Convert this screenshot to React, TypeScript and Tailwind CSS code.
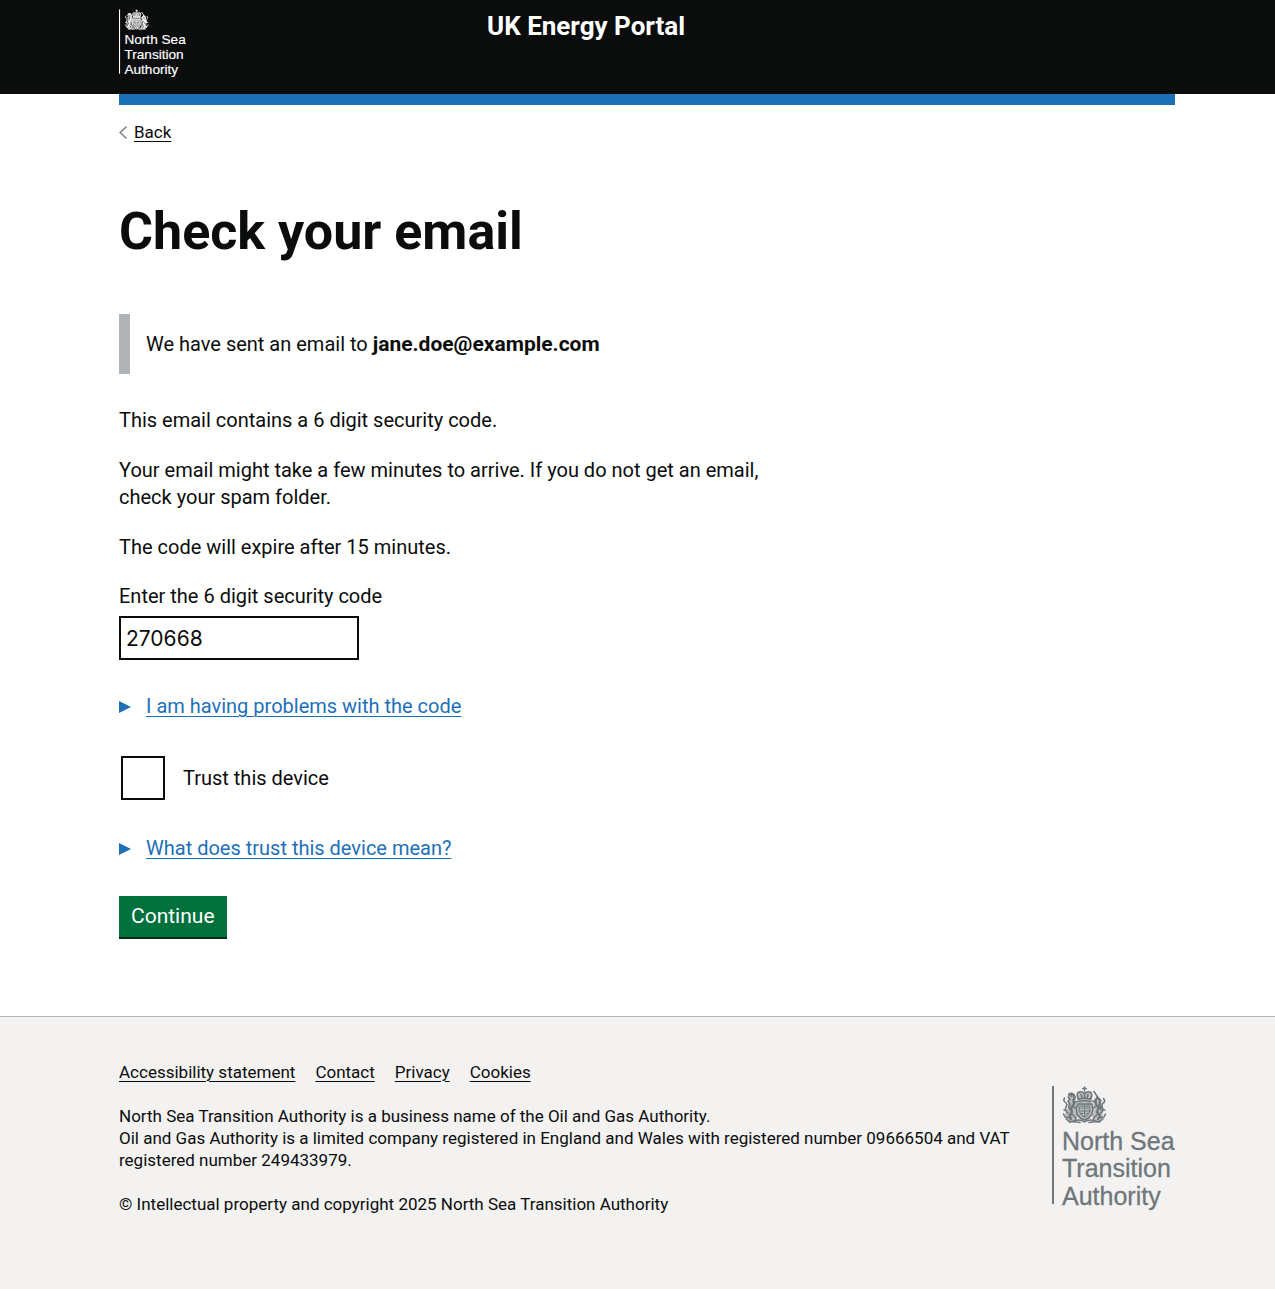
import { ReactNode, useState } from "react";

const footerLinks = ["Accessibility statement", "Contact", "Privacy", "Cookies"];

// Royal arms with the authority name underneath, takes its colour from the text colour
const Logo = ({ className }: { className: string }) => (
  <svg className={className} viewBox="0 0 123 125" fill="currentColor" role="img" aria-label="North Sea Transition Authority">
    <rect x="0" y="0" width="2" height="118" />
    {/* soft body tone behind the arms */}
    <g opacity="0.45">
      <path d="M25 6H40V17H25Z" />
      <path d="M24 17H41L42 25L38 33L32.500 35L27 33L23 25Z" />
      <path d="M16 9L22 8L24 16L26 31L23 35L15 34L13 28L16 22Z" />
      <path d="M45 11L49 14L50 22L51 32L47 35L41 34L40 29L43 23L41 16Z" />
    </g>
    <g fill="none" stroke="currentColor" strokeWidth="1.5" strokeLinecap="round" strokeLinejoin="round">
      {/* crown */}
      <path d="M26.500 12.500C24 9.500 25 6 28 5.800C30 5.700 31.500 6.500 32.500 7.500C33.500 6.500 35 5.700 37 5.800C40 6 41 9.500 38.500 12.500" />
      <path d="M26.500 13.200Q32.500 11.500 38.500 13.200M26.800 15.500Q32.500 13.800 38.200 15.500" />
      <path d="M32.500 1V5M30.800 2.500H34.200M32.500 7.500V12M29 8.500L30 11.500M36 8.500L35 11.500" />
      {/* garter and shield */}
      <path d="M26 18H39.500L41 22L40 28L36.500 32L32.500 34L28.500 32L25 28L24.200 22Z" />
      <path strokeWidth="1" d="M27.500 20H37.800V26Q36 30 32.600 31Q29 30 27.500 26ZM32.600 20V31M27.500 25H38M29 22H31M34 22H36.500M29 27.500H31M34.500 27.500H36.500" />
      {/* lion */}
      <path strokeWidth="2.400" d="M17 8.500Q20 6.500 22 9.500Q23.500 12 21.500 14L22 18L19 22L20 26L17.500 30L19 33" />
      <path d="M16 11L18 13L16 15.500L18 18L16.500 21L18.500 24M22 17L25 15.500M21 21L24.500 22M19.500 28L23 30.500L24 34" />
      <path d="M16 27Q12.500 25 14 21Q16 18 13 16Q11 14.500 12.500 12M17 32L13 31L11.500 28M18 10H20" />
      {/* unicorn */}
      <path strokeWidth="2.200" d="M45.500 11.500L43.500 14L44 18L46.500 22L45 26L48 30L46 33M45.500 11.500L48.500 14.500L47.500 18L49 22" />
      <path d="M45.500 11L42 5.500M43.500 16L40.500 15M44 20L41 22.500M47 20L49 24M46 28L42.500 31L41 34" />
      <path d="M48.500 27Q52 25 50.500 21.500Q49 18 52 16.500Q53.500 14.500 51.500 12.500M48 32L52 31L53.500 28" />
      {/* motto scroll */}
      <path d="M14 33Q18 37 23 34.500Q28 33 32.500 36Q37 33 42 34.500Q47 37 51 33" />
      <path d="M17 36Q23 35.500 28 36.500M48 36Q42 35.500 37 36.500M12 24L14 24M51 24L53 24" />
    </g>
    <g fontFamily="'Liberation Sans', Arial, sans-serif" fontSize="25" stroke="currentColor" strokeWidth="0.3">
      <text x="10" y="64">North Sea</text>
      <text x="10" y="91">Transition</text>
      <text x="10" y="119">Authority</text>
    </g>
  </svg>
);

const Details = ({ summary, children }: { summary: string; children: ReactNode }) => {
  const [open, setOpen] = useState(false);

  return (
    <details className="group" onToggle={(e) => setOpen(e.currentTarget.open)}>
      <summary className="flex w-fit cursor-pointer list-none items-center text-[#1d70b8]">
        <svg className="mr-[15px] h-3 w-3 group-open:rotate-90" viewBox="0 0 12 12" fill="currentColor" aria-hidden="true">
          <path d="M0 0L12 6L0 12Z" />
        </svg>
        <span className="underline decoration-1 underline-offset-3">{summary}</span>
      </summary>
      {open && <div className="mt-4 border-l-4 border-[#b1b4b6] py-4 pl-5">{children}</div>}
    </details>
  );
};

const App = () => {
  const [code, setCode] = useState("270668");
  const [trusted, setTrusted] = useState(false);

  return (
    <div className="flex min-h-screen flex-col bg-white font-['Roboto',sans-serif] text-[#0b0c0c]">
      <header className="bg-[#0b0c0c] pr-[100px] pl-[119px] text-white">
        <div className="flex h-[94px] items-start">
          <a href="#" className="w-1/3 pt-[9px]">
            <Logo className="h-[69px] w-[67px]" />
          </a>
          <a href="#" className="pt-[11px] pl-4 text-[26px] leading-[30px] font-bold">
            UK Energy Portal
          </a>
        </div>
      </header>

      <div className="grow pr-[100px] pl-[119px]">
        <div className="h-[11px] bg-[#1d70b8]" />
        <a href="#" className="mt-4 flex w-fit items-center text-[17px] leading-[22px]">
          <svg className="mr-[7px] h-[13px] w-2" viewBox="0 0 8 13" fill="none" stroke="#868889" strokeWidth="1.600" aria-hidden="true">
            <path d="M7.500 0.700L1.200 6.500L7.500 12.300" />
          </svg>
          <span className="underline decoration-1 underline-offset-3">Back</span>
        </a>

        <main className="max-w-[672px] pt-[61px] pb-[76px] text-[20px] leading-[27px]">
          <h1 className="text-[52px] leading-[56px] font-bold">Check your email</h1>

          <div className="mt-[54px] mb-[33px] border-l-[11px] border-[#b1b4b6] py-4 pl-4 leading-7">
            We have sent an email to <strong className="text-[21px] font-bold">jane.doe@example.com</strong>
          </div>

          <div className="flex flex-col gap-[23px]">
            <p>This email contains a 6 digit security code.</p>
            <p>Your email might take a few minutes to arrive. If you do not get an email, check your spam folder.</p>
            <p>The code will expire after 15 minutes.</p>
          </div>

          <form className="mt-[22px]" onSubmit={(e) => e.preventDefault()}>
            <label htmlFor="code" className="block">
              Enter the 6 digit security code
            </label>
            <input
              id="code"
              type="text"
              inputMode="numeric"
              value={code}
              onChange={(e) => setCode(e.target.value)}
              className="mt-[6px] mb-[33px] block h-11 w-60 border-2 border-[#0b0c0c] px-[5px] font-['Inter',sans-serif] text-[21px]"
            />

            <Details summary="I am having problems with the code">
              Check that you entered the most recent code we sent you.
            </Details>

            <div className="mt-9 mb-[35px] ml-0.5 flex items-center">
              <input
                id="trust"
                type="checkbox"
                checked={trusted}
                onChange={(e) => setTrusted(e.target.checked)}
                className="h-11 w-11 appearance-none border-2 border-[#0b0c0c] checked:bg-[#0b0c0c]"
              />
              <label htmlFor="trust" className="pl-[18px]">
                Trust this device
              </label>
            </div>

            <Details summary="What does trust this device mean?">
              We will not ask you for a security code on this device again.
            </Details>

            <button
              type="submit"
              className="mt-[34px] block h-[43px] border-b-2 border-[#002d18] bg-[#00703c] px-3 text-[21px] leading-[27px] text-white"
            >
              Continue
            </button>
          </form>
        </main>
      </div>

      <footer className="border-t border-[#b1b4b6] bg-[#f3f2f1] pt-11 pr-[100px] pb-[74px] pl-[119px] text-[17px] leading-[22px]">
        <div className="flex items-center justify-between gap-8">
          <div>
            <nav className="mb-[22px] flex flex-wrap gap-5">
              {footerLinks.map((link) => (
                <a key={link} href="#" className="underline decoration-1 underline-offset-3">
                  {link}
                </a>
              ))}
            </nav>
            <p>
              North Sea Transition Authority is a business name of the Oil and Gas Authority.
              <br />
              Oil and Gas Authority is a limited company registered in England and Wales with registered number 09666504
              and VAT registered number 249433979.
            </p>
            <p className="mt-[22px]">© Intellectual property and copyright 2025 North Sea Transition Authority</p>
          </div>
          <Logo className="mt-5 h-[125px] w-[123px] shrink-0 text-[#6f777b]" />
        </div>
      </footer>
    </div>
  );
};
export default App;
